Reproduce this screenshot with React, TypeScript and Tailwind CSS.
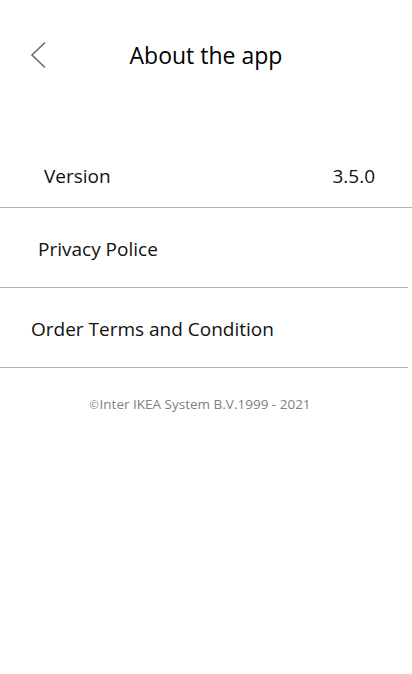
import React from 'react';

const font = { fontFamily: '"Open Sans", "Noto Sans", sans-serif' };

const App: React.FC = () => {
  return (
    <div className="w-[412px] h-[674px] bg-white text-black" style={font}>
      {/* Header */}
      <div className="relative h-[112px] pt-[37px]">
        <button className="absolute left-[28px] top-[40px] w-[20px] h-[30px] flex items-center justify-center">
          <svg width="16" height="28" viewBox="0 0 16 28" fill="none">
            <path d="M15 1.5L2 14L15 26.5" stroke="#6b6b6b" strokeWidth="1.6" />
          </svg>
        </button>
        <h1 className="text-center text-[23px] leading-[36px] font-normal">About the app</h1>
      </div>

      {/* Rows */}
      <div className="pt-[16px]">
        <div className="flex items-center justify-between h-[80px] pl-[44px] pr-[37px] pt-[18px] border-b border-[#b3b3b3] text-[19px] text-[#111]">
          <span>Version</span>
          <span>3.5.0</span>
        </div>
        <div className="w-[408px] border-b border-[#b3b3b3]">
          <div className="h-[79px] flex items-center pl-[38px] pt-[4px] text-[19px] text-[#111]">Privacy Police</div>
        </div>
        <div className="w-[408px] border-b border-[#b3b3b3]">
          <div className="h-[79px] flex items-center pl-[31px] pt-[4px] text-[19px] text-[#111]">Order Terms and Condition</div>
        </div>
      </div>

      <p className="text-center text-[13.5px] text-[#808080] mt-[26px] pr-[12px]">
        <span className="text-[11px] mr-[1px]">©</span>Inter IKEA System B.V.1999 - 2021
      </p>
    </div>
  );
};

export default App;
